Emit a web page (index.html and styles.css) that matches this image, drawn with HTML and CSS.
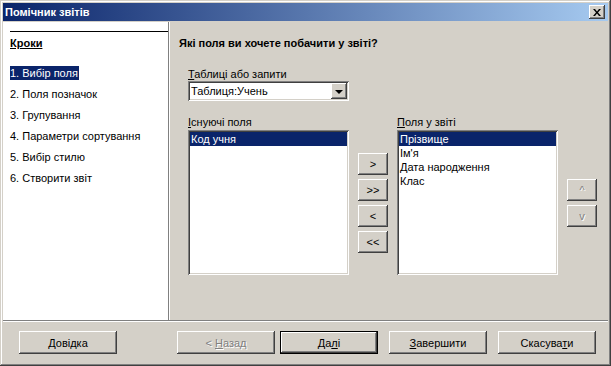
FILE: index.html
```html
<!doctype html>
<html>

<head>
   <meta charset="utf-8">
   <title>Помічник звітів</title>
   <link rel="stylesheet" href="styles.css">
</head>

<body>

   <div class="window">
      <div class="titleBar">
         <div class="title">Помічник звітів</div>
         <div class="closeBtn">
            <svg width="8" height="7" viewBox="0 0 8 7">
               <path d="M0 0h2l2 2.5L6 0h2L5 3.5 8 7H6L4 4.5 2 7H0l3-3.5z" fill="#000" />
            </svg>
         </div>
      </div>

      <div class="main">
         <div class="steps">
            <div class="stepsHead">Кроки</div>
            <div class="step"><span class="current">1. Вибір поля</span></div>
            <div class="step">2. Поля позначок</div>
            <div class="step">3. Групування</div>
            <div class="step">4. Параметри сортування</div>
            <div class="step">5. Вибір стилю</div>
            <div class="step">6. Створити звіт</div>
         </div>

         <div class="page">
            <div class="question">Які поля ви хочете побачити у звіті?</div>

            <div class="form">
               <div class="label"><u>Т</u>аблиці або запити</div>
               <div class="combo">
                  <div class="comboText">Таблиця:Учень</div>
                  <div class="comboBtn"><span class="arrow"></span></div>
               </div>

               <div class="fields">
                  <div class="label"><u>І</u>снуючі поля</div>
                  <div></div>
                  <div class="label"><u>П</u>оля у звіті</div>
                  <div></div>

                  <div class="list">
                     <div class="item selected">Код учня</div>
                  </div>

                  <div class="moveBtns">
                     <button class="btn small">&gt;</button>
                     <button class="btn small">&gt;&gt;</button>
                     <button class="btn small">&lt;</button>
                     <button class="btn small">&lt;&lt;</button>
                  </div>

                  <div class="list">
                     <div class="item selected">Прізвище</div>
                     <div class="item">Ім'я</div>
                     <div class="item">Дата народження</div>
                     <div class="item">Клас</div>
                  </div>

                  <div class="orderBtns">
                     <button class="btn small disabled">^</button>
                     <button class="btn small disabled">v</button>
                  </div>
               </div>
            </div>
         </div>
      </div>

      <div class="footer">
         <button class="btn wide help"><u>Д</u>овідка</button>
         <button class="btn wide back disabled">&lt; <u>Н</u>азад</button>
         <button class="btn wide next default">Да<u>л</u>і</button>
         <button class="btn wide finish"><u>З</u>авершити</button>
         <button class="btn wide cancel">Скасува<u>т</u>и</button>
      </div>
   </div>

</body>

</html>
```

FILE: styles.css
```css
html,
body {
   padding: 0;
   margin: 0;
   background: #d4d0c8;
   font-family: "Liberation Sans", Arial, sans-serif;
   font-size: 11px;
   color: #000;
}

.window {
   width: 611px;
   height: 366px;
   box-sizing: border-box;
   padding: 3px 3px 4px 3px;
   background: #d4d0c8;
   box-shadow: inset -1px -1px #404040, inset 1px 1px #d4d0c8, inset -2px -2px #808080, inset 2px 2px #fff;
   display: flex;
   flex-direction: column;
}

/* title bar */
.titleBar {
   height: 18px;
   flex: none;
   display: flex;
   align-items: center;
   justify-content: space-between;
   padding: 0 3px 0 2px;
   background: linear-gradient(to right, #0a246a, #a6caf0);
}

.titleBar .title {
   color: #fff;
   font-weight: bold;
   font-size: 11px;
}

.closeBtn {
   width: 16px;
   height: 14px;
   box-sizing: border-box;
   background: #d4d0c8;
   display: flex;
   align-items: center;
   justify-content: center;
   box-shadow: inset -1px -1px #404040, inset 1px 1px #fff, inset -2px -2px #808080;
}

/* main area */
.main {
   flex: 1;
   display: flex;
   margin-top: 1px;
   border-bottom: 1px solid #808080;
}

.steps {
   width: 166px;
   flex: none;
   background: #fff;
   border-right: 1px solid #808080;
   padding: 9px 0 0 7px;
   box-sizing: border-box;
}

.stepsHead {
   border-top: 1px solid #000;
   padding-top: 4px;
   font-weight: bold;
   text-decoration: underline;
   height: 15px;
   line-height: 15px;
   margin-bottom: 15px;
}

.step {
   height: 21px;
   line-height: 14px;
}

.step .current {
   background: #0a246a;
   color: #fff;
   padding: 0 1px 0 0;
   display: inline-block;
}

.page {
   flex: 1;
   padding: 14px 0 0 9px;
   border-left: 1px solid #fff;
}

.question {
   font-weight: bold;
   line-height: 14px;
}

.form {
   padding: 17px 0 0 9px;
}

.label {
   line-height: 14px;
   height: 14px;
}

/* combobox */
.combo {
   width: 161px;
   height: 20px;
   box-sizing: border-box;
   background: #fff;
   display: flex;
   padding: 2px;
   box-shadow: inset 1px 1px #808080, inset -1px -1px #fff, inset 2px 2px #404040, inset -2px -2px #d4d0c8;
}

.comboText {
   flex: 1;
   line-height: 16px;
   padding-left: 1px;
}

.comboBtn {
   width: 16px;
   height: 16px;
   background: #d4d0c8;
   box-sizing: border-box;
   display: flex;
   align-items: center;
   justify-content: center;
   box-shadow: inset -1px -1px #404040, inset 1px 1px #fff, inset -2px -2px #808080;
}

.arrow {
   width: 0;
   height: 0;
   border-left: 4px solid transparent;
   border-right: 4px solid transparent;
   border-top: 4px solid #000;
   margin-top: 1px;
}

/* field lists */
.fields {
   display: grid;
   grid-template-columns: 161px 30px 161px 30px;
   column-gap: 9px;
   margin-top: 14px;
}

.list {
   height: 145px;
   box-sizing: border-box;
   background: #fff;
   padding: 2px;
   box-shadow: inset 1px 1px #808080, inset -1px -1px #fff, inset 2px 2px #404040, inset -2px -2px #d4d0c8;
   margin-top: 1px;
}

.list .item {
   height: 14px;
   line-height: 14px;
   padding-left: 1px;
}

.list .item.selected {
   background: #0a246a;
   color: #fff;
}

.moveBtns,
.orderBtns {
   display: flex;
   flex-direction: column;
   gap: 4px;
}

.moveBtns {
   padding-top: 24px;
}

.orderBtns {
   padding-top: 50px;
}

/* buttons */
.btn {
   background: #d4d0c8;
   border: none;
   margin: 0;
   padding: 0;
   font-family: inherit;
   font-size: 11px;
   color: #000;
   box-shadow: inset -1px -1px #404040, inset 1px 1px #fff, inset -2px -2px #808080, inset 2px 2px #d4d0c8;
}

.btn.small {
   width: 30px;
   height: 22px;
}

.btn.wide {
   width: 98px;
   height: 23px;
   flex: none;
}

.btn.disabled {
   color: #808080;
   text-shadow: 1px 1px #fff;
}

.btn.default {
   box-shadow: inset 0 0 0 1px #000, inset -2px -2px #404040, inset 2px 2px #fff, inset -3px -3px #808080;
}

/* footer */
.footer {
   flex: none;
   height: 41px;
   display: flex;
   align-items: flex-start;
   padding: 9px 0 0 16px;
   border-top: 1px solid #fff;
   box-sizing: border-box;
}

.footer .back {
   margin-left: 60px;
}

.footer .next {
   margin-left: 5px;
}

.footer .finish,
.footer .cancel {
   margin-left: 11px;
}
```
